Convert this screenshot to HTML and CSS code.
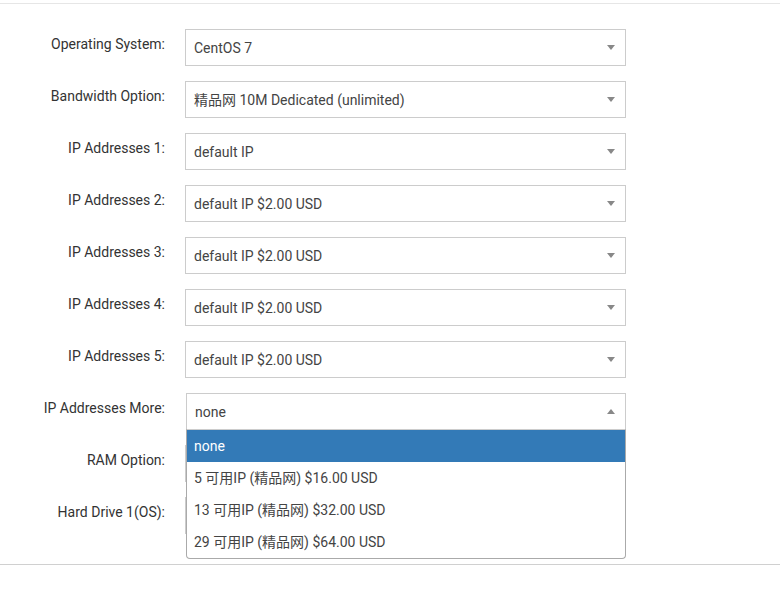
FILE: index.html
```html
<!DOCTYPE html>
<html>
<head>
<meta charset="utf-8">
<link rel="stylesheet" href="styles.css">
</head>
<body>
<div class="topline"></div>
<div class="form">
  <div class="row">
    <div class="label">Operating System:</div>
    <div class="select"><span class="value">CentOS 7</span><span class="arrow"></span></div>
  </div>
  <div class="row">
    <div class="label">Bandwidth Option:</div>
    <div class="select"><span class="value">精品网 10M Dedicated (unlimited)</span><span class="arrow"></span></div>
  </div>
  <div class="row">
    <div class="label">IP Addresses 1:</div>
    <div class="select"><span class="value">default IP</span><span class="arrow"></span></div>
  </div>
  <div class="row">
    <div class="label">IP Addresses 2:</div>
    <div class="select"><span class="value">default IP $2.00 USD</span><span class="arrow"></span></div>
  </div>
  <div class="row">
    <div class="label">IP Addresses 3:</div>
    <div class="select"><span class="value">default IP $2.00 USD</span><span class="arrow"></span></div>
  </div>
  <div class="row">
    <div class="label">IP Addresses 4:</div>
    <div class="select"><span class="value">default IP $2.00 USD</span><span class="arrow"></span></div>
  </div>
  <div class="row">
    <div class="label">IP Addresses 5:</div>
    <div class="select"><span class="value">default IP $2.00 USD</span><span class="arrow"></span></div>
  </div>
  <div class="row">
    <div class="label">IP Addresses More:</div>
    <div class="select open"><span class="value">none</span><span class="arrow up"></span>
      <ul class="dropdown">
        <li class="option active">none</li>
        <li class="option">5 可用IP (精品网) $16.00 USD</li>
        <li class="option">13 可用IP (精品网) $32.00 USD</li>
        <li class="option">29 可用IP (精品网) $64.00 USD</li>
      </ul>
    </div>
  </div>
  <div class="row">
    <div class="label">RAM Option:</div>
    <div class="select"><span class="value"></span><span class="arrow"></span></div>
  </div>
  <div class="row">
    <div class="label">Hard Drive 1(OS):</div>
    <div class="select"><span class="value"></span><span class="arrow"></span></div>
  </div>
</div>
<div class="bottomline"></div>
</body>
</html>
```

FILE: styles.css
```css
html, body {
  margin: 0;
  padding: 0;
  background: #fff;
}
body {
  font-family: Roboto, "Noto Sans CJK SC", sans-serif;
  font-size: 14px;
  color: #333;
}
.topline {
  height: 3px;
  border-bottom: 1px solid #e6e6e6;
}
.form {
  padding-top: 25px;
  display: flex;
  flex-direction: column;
  gap: 15px;
}
.row {
  display: flex;
  align-items: flex-start;
}
.label {
  width: 165px;
  text-align: right;
  line-height: 20px;
  padding-top: 5px;
  box-sizing: border-box;
  color: #333;
}
.select {
  position: relative;
  margin-left: 20px;
  width: 441px;
  height: 37px;
  box-sizing: border-box;
  border: 1px solid #ccc;
  display: flex;
  align-items: center;
  padding-left: 8px;
  color: #444;
  line-height: 20px;
}
.value {
  flex: 1;
  padding-top: 1px;
  min-height: 20px;
}
.arrow {
  width: 0;
  height: 0;
  border-style: solid;
  border-width: 5px 4px 0 4px;
  border-color: #888 transparent transparent transparent;
  margin-right: 10px;
}
.arrow.up {
  border-width: 0 4px 5px 4px;
  border-color: transparent transparent #888 transparent;
}
.select.open {
  margin-left: 21px;
  width: 440px;
  z-index: 5;
}
.dropdown {
  position: absolute;
  left: -1px;
  right: -1px;
  top: 35px;
  margin: 0;
  padding: 0;
  list-style: none;
  background: #fff;
  border: 1px solid #aaa;
  border-top-color: #ccc;
  border-radius: 0 0 4px 4px;
  z-index: 10;
}
.option {
  height: 32px;
  line-height: 32px;
  padding-left: 7px;
  color: #444;
}
.option.active {
  background: #337ab7;
  color: #fff;
}
.bottomline {
  margin-top: 30px;
  border-top: 1px solid #d0d0d0;
}
```
